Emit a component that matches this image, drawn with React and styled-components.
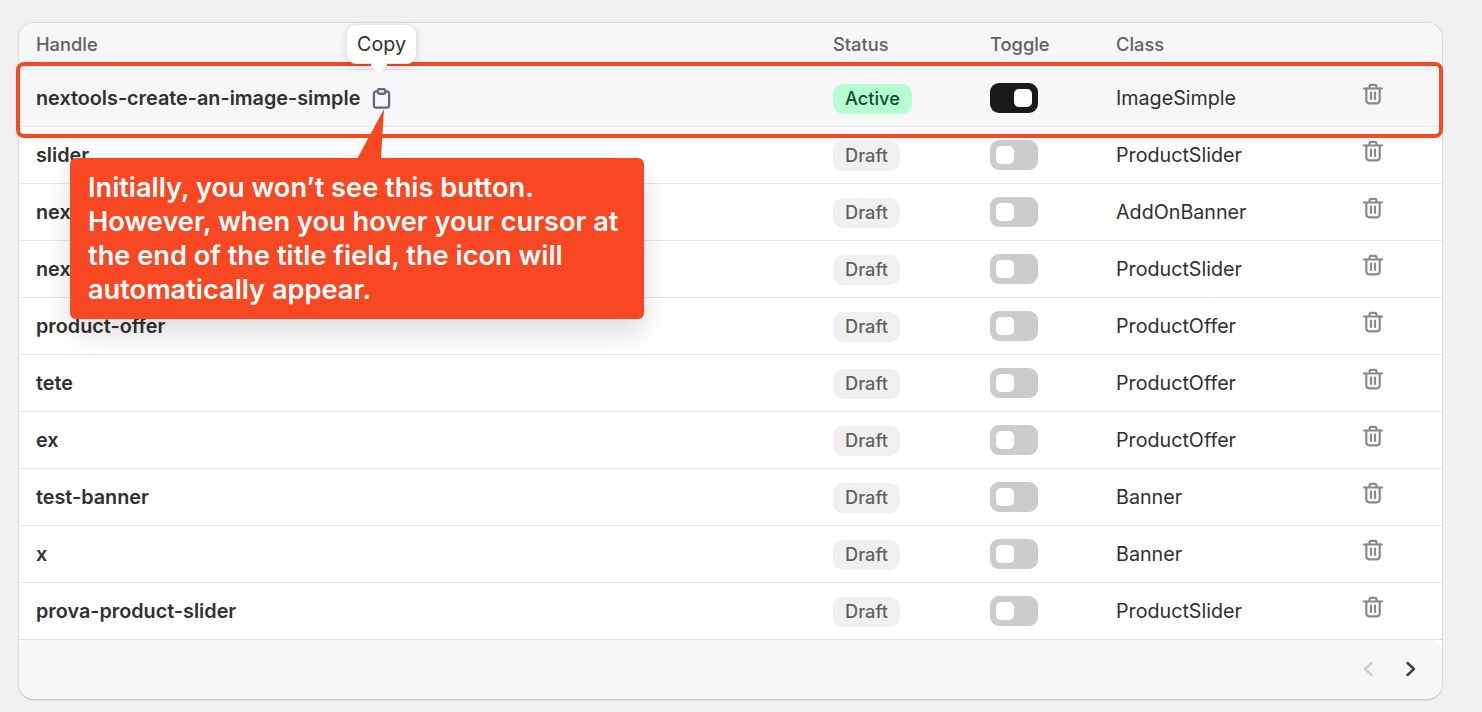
import React from "react";
import styled, { createGlobalStyle } from "styled-components";

const rows = [
	{ handle: "nextools-create-an-image-simple", active: true, cls: "ImageSimple" },
	{ handle: "slider", cls: "ProductSlider" },
	{ handle: "nextools-banner", cls: "AddOnBanner" },
	{ handle: "nextools-slider", cls: "ProductSlider" },
	{ handle: "product-offer", cls: "ProductOffer" },
	{ handle: "tete", cls: "ProductOffer" },
	{ handle: "ex", cls: "ProductOffer" },
	{ handle: "test-banner", cls: "Banner" },
	{ handle: "x", cls: "Banner" },
	{ handle: "prova-product-slider", cls: "ProductSlider" },
];

const TrashIcon = () => (
	<svg width="22" height="22" viewBox="0 0 22 22" fill="none" stroke="#8a8a8a" strokeWidth="2.200" strokeLinecap="round" strokeLinejoin="round">
		<path d="M2 5.500h18" />
		<path d="M7.500 5V3.600c0-1 .8-1.800 1.800-1.800h3.400c1 0 1.800.8 1.800 1.800V5" />
		<path d="M4.300 5.500v11.800c0 1.700 1.300 3 3 3h7.400c1.700 0 3-1.300 3-3V5.500" />
		<path d="M9 9.500v6.500M13 9.500v6.500" />
	</svg>
);

const ClipboardIcon = () => (
	<svg width="19" height="21" viewBox="0 0 20 22" fill="none" stroke="#5f6b7c" strokeWidth="2.400" strokeLinejoin="round">
		<path d="M6 3.500H4.500C3 3.500 2 4.500 2 6v12c0 1.500 1 2.500 2.500 2.500h11c1.500 0 2.500-1 2.500-2.500V6c0-1.500-1-2.500-2.500-2.500H14" />
		<rect x="6" y="1" width="8" height="5" rx="2.200" />
	</svg>
);

const Chevron = ({ dir, color }) => (
	<svg width="12" height="16" viewBox="0 0 12 16" fill="none" stroke={color} strokeWidth="2.400" strokeLinecap="round" strokeLinejoin="round">
		<path d={dir === "left" ? "M9.500 2L3 8l6.500 6" : "M2.500 2L9 8l-6.500 6"} />
	</svg>
);

const App = () => (
	<Page>
		<GlobalStyle />
		<Card>
			<HeaderRow>
				<HeadCell>Handle</HeadCell>
				<HeadCell>Status</HeadCell>
				<HeadCell>Toggle</HeadCell>
				<HeadCell>Class</HeadCell>
				<span />
			</HeaderRow>
			{rows.map((row) => (
				<Row key={row.handle} $active={row.active}>
					<HandleCell>
						{row.handle}
						{row.active && (
							<CopyButton>
								<ClipboardIcon />
							</CopyButton>
						)}
					</HandleCell>
					<BadgeCell>
						<Badge $active={row.active}>{row.active ? "Active" : "Draft"}</Badge>
					</BadgeCell>
					<Toggle $active={row.active}>
						<Knob />
					</Toggle>
					<ClassCell>{row.cls}</ClassCell>
					<TrashCell>
						<TrashIcon />
					</TrashCell>
				</Row>
			))}
			<Footer>
				<Pager>
					<Chevron dir="left" color="#cfcfcf" />
					<Chevron dir="right" color="#404040" />
				</Pager>
			</Footer>
			<Highlight />
			<Tooltip>Copy</Tooltip>
			<Callout>
				<CalloutTail viewBox="0 0 30 50" width="30" height="50">
					<polygon points="27,0 0,50 24,50" fill="#f84823" />
				</CalloutTail>
				Initially, you won’t see this button. However, when you hover your cursor at the end of the title field, the icon will automatically appear.
			</Callout>
		</Card>
	</Page>
);

const GlobalStyle = createGlobalStyle`
	html, body {
		margin: 0;
		background: #f1f1f1;
		font-family: Inter, "Liberation Sans", sans-serif;
	}
`;

const Page = styled.div`
	width: 1482px;
	height: 712px;
	box-sizing: border-box;
	padding: 22px 39px 0 18px;
	overflow: hidden;
`;

const Card = styled.div`
	position: relative;
	box-sizing: border-box;
	width: 1425px;
	height: 678px;
	background: #fff;
	border: 1px solid #dcdcdc;
	border-bottom-color: #c8c8c8;
	border-radius: 16px;
	box-shadow: 0 1px 1px rgba(0, 0, 0, 0.08);
`;

const columns = "797px 157px 126px 246px 1fr";

const HeaderRow = styled.div`
	display: grid;
	grid-template-columns: ${columns};
	align-items: center;
	box-sizing: border-box;
	height: 46px;
	padding: 0 0 5px 17px;
	background: #f7f7f7;
	border-radius: 16px 16px 0 0;
`;

const HeadCell = styled.div`
	font-size: 18.300px;
	font-weight: 500;
	color: #616161;
`;

const Row = styled.div`
	display: grid;
	grid-template-columns: ${columns};
	align-items: center;
	box-sizing: border-box;
	height: 57px;
	padding-left: 17px;
	border-top: 1px solid #e6e6e6;
	background: ${(p) => (p.$active ? "#f7f7f7" : "#fff")};
`;

const HandleCell = styled.div`
	display: flex;
	align-items: center;
	font-size: 19.800px;
	font-weight: 600;
	color: #303030;
`;

const CopyButton = styled.span`
	display: flex;
	margin-left: 12px;
`;

const BadgeCell = styled.div`
	display: flex;
	padding-top: 2px;
`;

const Badge = styled.span`
	height: 30px;
	line-height: 28px;
	padding: 0 12px;
	border-radius: 10px;
	font-size: 18.200px;
	font-weight: ${(p) => (p.$active ? 500 : 450)};
	color: ${(p) => (p.$active ? "#0c5132" : "#616161")};
	background: ${(p) => (p.$active ? "#b4fed2" : "#f0f0f0")};
`;

const Toggle = styled.div`
	display: flex;
	align-items: center;
	justify-content: ${(p) => (p.$active ? "flex-end" : "flex-start")};
	box-sizing: border-box;
	width: 48px;
	height: 30px;
	padding: 0 6px;
	border-radius: 9px;
	background: ${(p) => (p.$active ? "#1a1a1a" : "#cccccc")};
`;

const Knob = styled.div`
	width: 18px;
	height: 18px;
	border-radius: 5px;
	background: #fff;
`;

const ClassCell = styled.div`
	font-size: 19.700px;
	color: #303030;
`;

const TrashCell = styled.div`
	display: flex;
	margin-bottom: 8px;
`;

const Footer = styled.div`
	box-sizing: border-box;
	height: 59px;
	border-top: 1px solid #e0e0e0;
	border-radius: 0 0 16px 16px;
`;

const Pager = styled.div`
	display: flex;
	align-items: center;
	justify-content: flex-end;
	gap: 31px;
	height: 100%;
	padding-right: 25px;
	box-sizing: border-box;
	background: #f7f7f7;
	border-radius: 10px 10px 15px 15px;
`;

const Tooltip = styled.div`
	position: absolute;
	left: 327px;
	top: 1px;
	width: 71px;
	height: 40px;
	box-sizing: border-box;
	display: flex;
	align-items: center;
	justify-content: center;
	background: #fff;
	border: 1px solid #e4e4e4;
	border-radius: 10px;
	box-shadow: 0 3px 8px rgba(0, 0, 0, 0.12);
	font-size: 19.700px;
	color: #303030;

	&::after {
		content: "";
		position: absolute;
		left: 25px;
		bottom: -9px;
		width: 14px;
		height: 14px;
		background: #fff;
		transform: rotate(45deg) scale(0.85);
	}
`;

const Highlight = styled.div`
	position: absolute;
	left: -3px;
	top: 39px;
	width: 1427px;
	height: 76px;
	box-sizing: border-box;
	border: 4px solid #f84823;
	border-radius: 8px;
	pointer-events: none;
`;

const Callout = styled.div`
	position: absolute;
	left: 51px;
	top: 135px;
	width: 574px;
	height: 161px;
	box-sizing: border-box;
	padding: 13px 18px;
	background: #f84823;
	border-radius: 6px;
	box-shadow: 0 14px 30px rgba(0, 0, 0, 0.14);
	font-size: 27.200px;
	font-weight: 600;
	line-height: 34px;
	color: #fff;
`;

const CalloutTail = styled.svg`
	position: absolute;
	left: 287px;
	top: -49px;
	display: block;
`;

export default App;
